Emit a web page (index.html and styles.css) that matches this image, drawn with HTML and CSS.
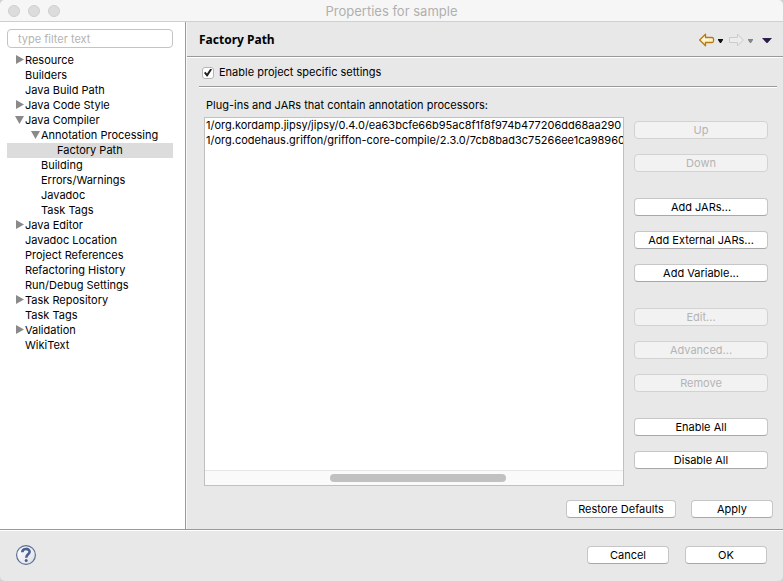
FILE: index.html
```html
<!DOCTYPE html>
<html lang="en">
<head>
<meta charset="utf-8">
<title>Properties for sample</title>
<link rel="stylesheet" href="styles.css">
</head>
<body>
<div class="window">
  <header class="titlebar">
    <div class="lights"><span class="light"></span><span class="light"></span><span class="light"></span></div>
    <h1 class="window-title">Properties for sample</h1>
  </header>
  <div class="body">
    <nav class="sidebar">
      <input class="filter" type="text" placeholder="type filter text" aria-label="Filter">
      <ul class="tree">
        <li class="node closed">Resource</li>
        <li class="node">Builders</li>
        <li class="node">Java Build Path</li>
        <li class="node closed">Java Code Style</li>
        <li class="node open">Java Compiler</li>
        <li class="node level-2 open">Annotation Processing</li>
        <li class="node level-3 selected">Factory Path</li>
        <li class="node level-2">Building</li>
        <li class="node level-2">Errors/Warnings</li>
        <li class="node level-2">Javadoc</li>
        <li class="node level-2">Task Tags</li>
        <li class="node closed">Java Editor</li>
        <li class="node">Javadoc Location</li>
        <li class="node">Project References</li>
        <li class="node">Refactoring History</li>
        <li class="node">Run/Debug Settings</li>
        <li class="node closed">Task Repository</li>
        <li class="node">Task Tags</li>
        <li class="node closed">Validation</li>
        <li class="node">WikiText</li>
      </ul>
    </nav>
    <main class="page">
      <div class="page-header">
        <h2 class="page-title">Factory Path</h2>
        <div class="history">
          <button class="tool" aria-label="Back"><svg width="24" height="14" viewBox="0 0 24 14"><defs><linearGradient id="gold" x1="0" y1="0" x2="0" y2="1"><stop offset="0" stop-color="#fff"/><stop offset="1" stop-color="#ffe9a0"/></linearGradient></defs><path d="M.7 7 6.500 1.200V4.500H13Q14.500 4.500 14.500 6V8Q14.500 9.500 13 9.500H6.500V12.800Z" fill="url(#gold)" stroke="#b47a14" stroke-width="1.300" stroke-linejoin="round"/><path d="M19 6h5v1l-2 3h-1l-2-3z" fill="#111"/></svg></button>
          <button class="tool" aria-label="Forward" disabled><svg width="24" height="14" viewBox="0 0 24 14"><path d="M14.300 7 8.500 1.200V4.500H.5V9.500H8.500V12.800Z" fill="#ececec" stroke="#cbcbcb" stroke-linejoin="round"/><path d="M19 6h5v1l-2 3h-1l-2-3z" fill="#858585"/></svg></button>
          <button class="tool" aria-label="Menu"><svg width="10" height="14" viewBox="0 0 10 14"><path d="M0 5h10L5.500 10h-1z" fill="#33205a"/><path d="M1.500 6h7L5 9z" fill="#252525"/></svg></button>
        </div>
      </div>
      <div class="page-content">
        <label class="enable"><input class="check" type="checkbox" checked><span>Enable project specific settings</span></label>
        <p class="list-label" id="list-label">Plug-ins and JARs that contain annotation processors:</p>
        <div class="editor">
          <div class="list">
            <ul class="jars" aria-labelledby="list-label">
              <li>1/org.kordamp.jipsy/jipsy/0.4.0/ea63bcfe66b95ac8f1f8f974b477206dd68aa290</li>
              <li>1/org.codehaus.griffon/griffon-core-compile/2.3.0/7cb8bad3c75266ee1ca98960</li>
            </ul>
            <div class="track"><span></span><span class="thumb"></span></div>
          </div>
          <div class="actions">
            <div class="group"><button class="btn" disabled>Up</button><button class="btn" disabled>Down</button></div>
            <div class="group"><button class="btn">Add JARs...</button><button class="btn">Add External JARs...</button><button class="btn">Add Variable...</button></div>
            <div class="group"><button class="btn" disabled>Edit...</button><button class="btn" disabled>Advanced...</button><button class="btn" disabled>Remove</button></div>
            <div class="group"><button class="btn">Enable All</button><button class="btn">Disable All</button></div>
          </div>
        </div>
      </div>
      <div class="page-buttons"><button class="btn wide">Restore Defaults</button><button class="btn">Apply</button></div>
    </main>
  </div>
  <footer class="footer">
    <button class="tool" aria-label="Help"><svg width="20" height="20" viewBox="0 0 20 20"><defs><linearGradient id="disc" x1="0" y1="0" x2="1" y2="1"><stop offset="0" stop-color="#fff"/><stop offset="1" stop-color="#dcdfe8"/></linearGradient></defs><circle cx="10" cy="10" r="9.400" fill="url(#disc)" stroke="#5a7194" stroke-width="1.200"/><path d="M6.300 7.200C6.300 2.900 13.600 2.900 13.600 6.800C13.600 9.300 10.200 9.300 10.200 12.700" fill="none" stroke="#4c6190" stroke-width="2.600"/><circle cx="10.200" cy="15.400" r="1.500" fill="#4c6190"/></svg></button>
    <div class="footer-buttons"><button class="btn">Cancel</button><button class="btn">OK</button></div>
  </footer>
</div>
</body>
</html>
```
FILE: styles.css
```css
* { box-sizing: border-box; }
body {
  margin: 0;
  background: #d2d2d2;
  color: #000;
  font: 11px/15px Inter, "Liberation Sans", sans-serif;
}
ul, p, h1, h2 { margin: 0; padding: 0; list-style: none; }
button, input { font: inherit; }
.window {
  display: flex;
  flex-direction: column;
  min-height: 100vh;
  border-radius: 5px;
  overflow: hidden;
  background: #e8e8e8;
}
.titlebar {
  display: grid;
  grid-template-columns: 1fr auto 1fr;
  align-items: center;
  height: 22px;
  padding: 0 8px;
  background: #f6f6f6;
  border-bottom: 1px solid #d0d0d0;
}
.lights { display: flex; gap: 8px; }
.light {
  width: 12px;
  height: 12px;
  border: 1px solid #cecece;
  border-radius: 50%;
  background: #dcdcdc;
}
.window-title {
  color: #b0b0b0;
  font: 13px/20px Inter, "Liberation Sans", sans-serif;
}
.body { display: flex; flex: 1; }
.sidebar {
  flex: none;
  width: 186px;
  padding: 7px 12px 0 7px;
  background: #fff;
  border-right: 1px solid #999;
}
.filter {
  display: block;
  width: 100%;
  height: 19px;
  margin-bottom: 5px;
  padding: 0 10px;
  border: 1px solid #c4c4c4;
  border-radius: 4px;
  background: #fff;
}
.filter::placeholder { color: #b4b4b4; }
.node {
  position: relative;
  height: 15px;
  padding-left: 18px;
  white-space: nowrap;
}
.level-2 { padding-left: 34px; }
.level-3 { padding-left: 50px; }
.selected { background: #dcdcdc; }
.closed::before, .open::before {
  content: "";
  position: absolute;
  top: 2px;
  left: 9px;
  width: 8px;
  height: 9px;
  background: #8a8a8a;
  clip-path: polygon(0 0, 100% 50%, 0 100%);
}
.open::before {
  top: 3px;
  left: 8px;
  width: 9px;
  height: 8px;
  clip-path: polygon(0 0, 100% 0, 50% 100%);
}
.level-2.open::before { left: 24px; }
.page {
  display: flex;
  flex: 1;
  flex-direction: column;
  min-width: 0;
  border-left: 1px solid #f8f8f8;
}
.page-header {
  display: flex;
  justify-content: space-between;
  align-items: center;
  height: 36px;
  padding: 0 11px 0 12px;
  border-bottom: 1px solid #fff;
  box-shadow: inset 0 -1px #999;
}
.page-title { font: bold 12px/18px "Noto Sans", sans-serif; }
.history { display: flex; gap: 6px; }
.history .tool:last-child { margin-left: 3px; }
.tool { display: flex; padding: 0; border: 0; background: none; }
.page-content {
  display: flex;
  flex: 1;
  flex-direction: column;
  padding: 0 6px 0 12px;
}
.enable {
  display: flex;
  align-items: center;
  gap: 5px;
  height: 30px;
  padding-left: 3px;
  border-bottom: 1px solid #fff;
  box-shadow: inset 0 -1px #999;
}
.check {
  appearance: none;
  display: grid;
  place-items: center;
  width: 12px;
  height: 12px;
  margin: 0;
  border: 1px solid #b4b4b4;
  border-radius: 3px;
  background: #fff;
}
.check:checked::after {
  content: "";
  width: 8px;
  height: 8px;
  background: #222;
  clip-path: polygon(0 55%, 16% 40%, 38% 64%, 80% 0, 100% 12%, 44% 100%, 34% 100%);
}
.list-label { padding: 10px 7px 4px; }
.editor {
  display: flex;
  flex: 1;
  gap: 10px;
  padding: 0 9px 0 5px;
}
.list {
  display: flex;
  flex: 1;
  flex-direction: column;
  min-width: 0;
  border: 1px solid #c0c0c0;
  background: #fff;
}
.jars { flex: 1; padding-left: 1px; overflow: hidden; white-space: nowrap; }
.track {
  display: grid;
  grid-template-columns: 30% 42% 1fr;
  align-items: center;
  height: 15px;
  border-top: 1px solid #e6e6e6;
  background: #fafafa;
}
.thumb { height: 8px; border-radius: 4px; background: #c1c1c1; }
.actions {
  display: flex;
  flex: none;
  flex-direction: column;
  gap: 26px;
  width: 134px;
  padding-top: 4px;
}
.group { display: grid; gap: 15px; }
.btn {
  height: 18px;
  padding: 0;
  border: 1px solid #c6c6c6;
  border-bottom-color: #a8a8a8;
  border-radius: 4px;
  background: #fff;
  color: #000;
  line-height: 16px;
}
.btn:disabled {
  border-color: #d2d2d2;
  background: #f2f2f2;
  color: #b4b4b4;
}
.page-buttons {
  display: flex;
  justify-content: flex-end;
  gap: 15px;
  padding: 14px 10px 11px;
}
.page-buttons .btn, .footer-buttons .btn { width: 82px; }
.page-buttons .wide { width: 110px; }
.footer {
  display: flex;
  justify-content: space-between;
  align-items: center;
  height: 52px;
  padding: 0 16px 2px;
  border-top: 1px solid #999;
  box-shadow: inset 0 1px #fff;
}
.footer-buttons { display: flex; gap: 16px; }
```
